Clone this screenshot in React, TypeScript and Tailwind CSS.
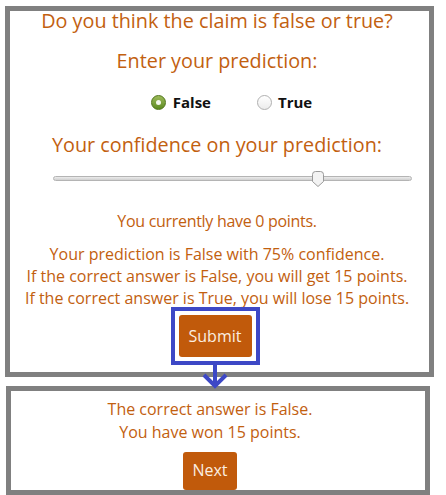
import React from 'react'

const orange = 'text-[#c2600f]'

function Radio({ checked }: { checked?: boolean }) {
  if (checked) {
    return (
      <span className="w-[15px] h-[15px] rounded-full border border-[#4f7419] bg-gradient-to-b from-[#9dbb5a] to-[#5d8a1f] flex items-center justify-center">
        <span className="w-[5px] h-[5px] rounded-full bg-[#f4f7ee]" />
      </span>
    )
  }
  return <span className="w-[15px] h-[15px] rounded-full border border-[#b0b0b0] bg-gradient-to-b from-white to-[#ececec]" />
}

export default function App() {
  return (
    <div className="relative w-[446px] h-[495px] bg-white overflow-hidden font-['Open_Sans',sans-serif]">
      {/* question panel */}
      <div className="ml-[5px] mt-[6px] w-[429px] h-[371px] border-[5px] border-[#808080] flex flex-col items-center pr-[5px]">
        <div className={`text-[19.8px] leading-[20px] ${orange}`}>Do you think the claim is false or true?</div>
        <div className={`mt-[20px] text-[19.8px] leading-[20px] ${orange}`}>Enter your prediction:</div>

        <div className="mt-[20px] flex items-center text-[15px] font-bold text-[#111] ml-[29px]">
          <label className="flex items-center gap-[7px]">
            <Radio checked />
            False
          </label>
          <label className="flex items-center gap-[6px] ml-[46px]">
            <Radio />
            True
          </label>
        </div>

        <div className={`mt-[21px] text-[19.8px] leading-[20px] ${orange}`}>Your confidence on your prediction:</div>

        {/* slider */}
        <div className="relative mt-[15px] w-[359px] h-[18px] ml-[30px] flex items-center">
          <div className="w-full h-[5px] rounded-full border border-[#b4b4b4] bg-gradient-to-b from-[#ececec] to-[#cfcfcf]" />
          <svg className="absolute left-[258px] top-0" width="14" height="18" viewBox="0 0 14 18">
            <path d="M1.5 4.5 Q1.5 1.5 4.5 1.5 H9.5 Q12.5 1.5 12.5 4.5 V11.5 L7 16.5 L1.5 11.5 Z" fill="#f3f3f3" stroke="#9a9a9a" strokeWidth="1" />
          </svg>
        </div>

        <div className={`mt-[22px] text-[16px] leading-[22px] tracking-[-0.3px] ${orange}`}>You currently have 0 points.</div>
        <div className={`mt-[11px] text-[16px] leading-[22px] text-center ${orange}`}>
          <div>Your prediction is False with 75% confidence.</div>
          <div>If the correct answer is False, you will get 15 points.</div>
          <div>If the correct answer is True, you will lose 15 points.</div>
        </div>

        <div className="relative mt-[-2px] ml-[-4px] border-[4px] border-[#3d48c6] p-[4px]">
          <button className="w-[73px] h-[42px] rounded-[3px] bg-[#c15a0b] text-[#fbeee0] text-[16px]">Submit</button>
          {/* arrow */}
          <svg className="absolute left-1/2 -translate-x-1/2 top-full" width="30" height="30" viewBox="0 0 30 30">
            <path d="M15 0 V25" stroke="#3d48c6" strokeWidth="4" />
            <path d="M4 14 L15 25 L26 14" stroke="#3d48c6" strokeWidth="4" fill="none" />
          </svg>
        </div>
      </div>

      {/* result panel */}
      <div className="ml-[6px] mt-[9px] w-[424px] h-[109px] border-[5px] border-[#808080] flex flex-col items-center overflow-hidden pr-[16px]">
        <div className={`mt-[7px] text-[16px] leading-[23px] text-center ${orange}`}>
          <div>The correct answer is False.</div>
          <div>You have won 15 points.</div>
        </div>
        <button className="mt-[8px] w-[54px] h-[42px] rounded-[3px] bg-[#c15a0b] text-[#fbeee0] text-[16px] pb-[2px]">Next</button>
      </div>
    </div>
  )
}
